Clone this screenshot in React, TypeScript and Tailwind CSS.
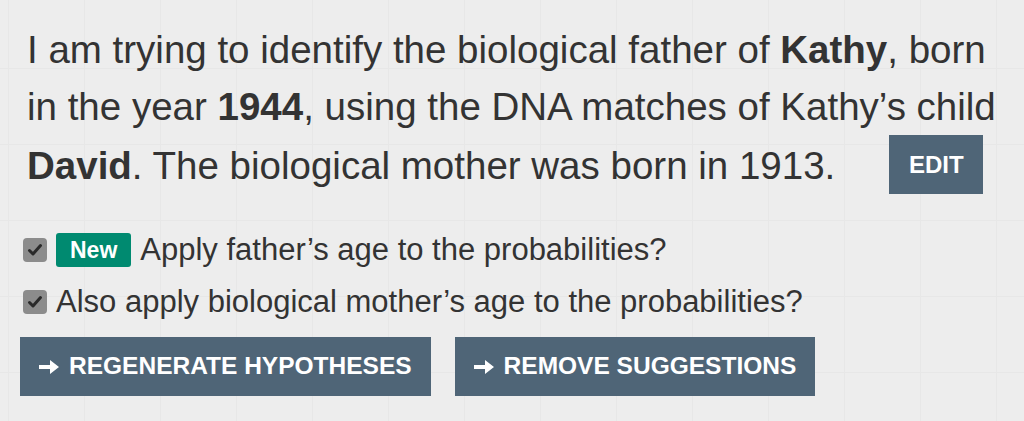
function Arrow() {
  return (
    <svg viewBox="0 0 20 16" className="h-[16px] w-[20px] shrink-0" fill="currentColor">
      <path d="M0 6h11V1l9 7-9 7V10H0z" />
    </svg>
  );
}

function Check() {
  return (
    <span className="flex h-6 w-6 shrink-0 items-center justify-center rounded-[4px] bg-[#8c8c8c]">
      <svg viewBox="0 0 16 16" className="h-4 w-4" fill="none" stroke="#2a2a2a" strokeWidth="3" strokeLinecap="round" strokeLinejoin="round">
        <path d="M2.5 8.5l3.5 3.5 7.5-8.5" />
      </svg>
    </span>
  );
}

function ActionButton({ label }: { label: string }) {
  return (
    <button className="flex h-[59px] items-center gap-[10px] bg-[#4f6577] px-[19px] text-[24.5px] font-bold uppercase text-white">
      <Arrow />
      <span>{label}</span>
    </button>
  );
}

export default function App() {
  return (
    <div
      className="min-h-[421px] w-full bg-[#ededed] bg-[linear-gradient(to_right,#e7e7e7_1px,transparent_1px),linear-gradient(to_bottom,#e7e7e7_1px,transparent_1px)] bg-[size:76px_76px] bg-[position:8px_68px] text-[#333] [font-family:'Liberation_Sans',Arial,sans-serif]"
    >
      <div className="px-[27px] pt-[21px]">
        <p className="text-[38.5px] leading-[57px]">
          I am trying to identify the biological father of <b>Kathy</b>, born
          <br />
          in the year <b>1944</b>, using the DNA matches of Kathy’s child
          <br />
          <b>David</b>. The biological mother was born in 1913.
          <button className="ml-[54px] inline-flex h-[59px] w-[94px] items-center justify-center bg-[#4f6577] align-[6px] text-[24px] font-bold uppercase leading-none text-white">
            Edit
          </button>
        </p>
      </div>

      <div className="mt-[39px] flex flex-col gap-[18px] pl-[23px]">
        <label className="flex items-center gap-[9px] text-[31px] leading-[34px]">
          <Check />
          <span className="flex h-[34px] items-center rounded-[3px] bg-[#008a70] px-[14px] text-[23px] font-bold text-white">
            New
          </span>
          <span>Apply father’s age to the probabilities?</span>
        </label>
        <label className="flex items-center gap-[9px] text-[31px] leading-[34px]">
          <Check />
          <span>Also apply biological mother’s age to the probabilities?</span>
        </label>
      </div>

      <div className="mt-[18px] flex gap-6 pl-5">
        <ActionButton label="Regenerate hypotheses" />
        <ActionButton label="Remove suggestions" />
      </div>
    </div>
  );
}
